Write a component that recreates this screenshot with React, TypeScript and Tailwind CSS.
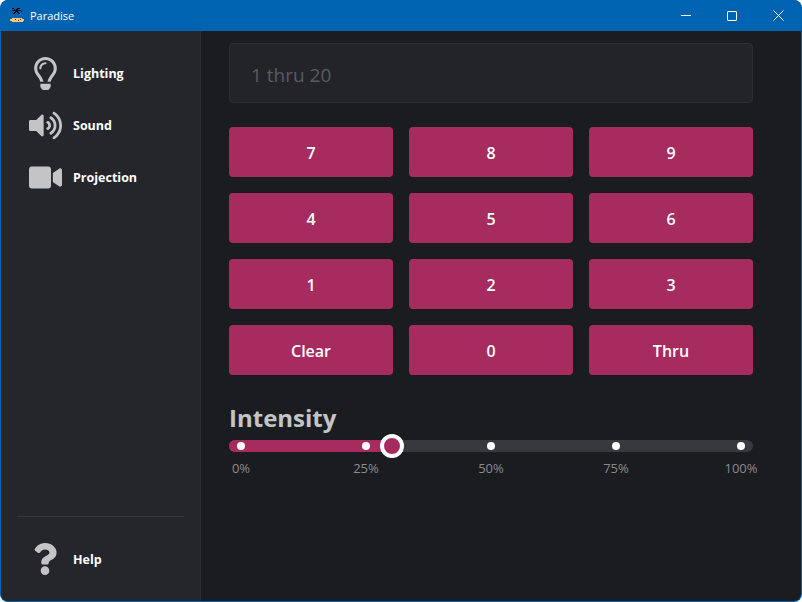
import React from "react";
import { FaRegLightbulb, FaVolumeUp, FaVideo, FaQuestion } from "react-icons/fa";

const keys = ["7", "8", "9", "4", "5", "6", "1", "2", "3", "Clear", "0", "Thru"];
const marks = ["0%", "25%", "50%", "75%", "100%"];

const NavItem = ({ icon, label }: { icon: React.ReactNode; label: string }) => (
  <div className="flex items-center h-[52px] pl-[27px]">
    <div className="w-[34px] h-[34px] flex items-center justify-center text-[#c4c4c6]">{icon}</div>
    <span className="ml-[11px] mt-[2px] text-[12.5px] font-bold text-white">{label}</span>
  </div>
);

// palm tree on a little sand island, drawn on a 16px grid
const Logo = () => (
  <svg width="16" height="16" viewBox="0 0 16 16" shapeRendering="crispEdges">
    <path
      fill="#000"
      d="M3 1h2v1h1v1h1V2h1V1h3v1H9v1h3v1h1v1h-1V4H9v1h1v1h1v1H9V6H8V5H7v1H6v1H4V6h1V5h1V4H3V3h2V2H3z"
    />
    <path fill="#f9c870" d="M3 11h10v1h2v2h-1v1H3v-1H1v-2h2z" />
    <path fill="#4a3410" d="M6 12h1v1H6zM9 13h1v1H9zM11 12h1v1h-1z" />
  </svg>
);

export default function App() {
  return (
    <div
      className="w-[802px] h-[602px] flex flex-col overflow-hidden rounded-lg bg-[#0063b1] border-x border-b border-[#0063b1]"
      style={{ fontFamily: '"Open Sans", "Noto Sans", sans-serif' }}
    >
      {/* Title bar */}
      <div className="h-[31px] shrink-0 flex items-center bg-[#0063b1] text-white">
        <div className="ml-[8px] mb-px">
          <Logo />
        </div>
        <span className="ml-[5px] mt-px text-[11px]">Paradise</span>
        <div className="ml-auto flex items-center">
          <div className="w-[46px] h-[31px] flex items-center justify-center">
            <div className="w-[10px] h-px bg-white" />
          </div>
          <div className="w-[46px] h-[31px] flex items-center justify-center">
            <div className="w-[10px] h-[10px] border border-white rounded-[1px]" />
          </div>
          <div className="w-[46px] h-[31px] flex items-center justify-center">
            <svg width="11" height="11" viewBox="0 0 11 11" stroke="#fff" strokeWidth="1">
              <path d="M0.5 0.5l10 10M10.5 0.5l-10 10" />
            </svg>
          </div>
        </div>
      </div>

      <div className="flex-1 flex min-h-0 bg-[#1b1c20] rounded-b-md overflow-hidden">
        {/* Sidebar */}
        <aside className="w-[199px] shrink-0 bg-[#25262b] border-r border-[#2d2e33] flex flex-col box-content">
          <nav className="pt-4">
            <NavItem icon={<FaRegLightbulb size={33} />} label="Lighting" />
            <NavItem icon={<FaVolumeUp size={33} />} label="Sound" />
            <NavItem icon={<FaVideo size={33} />} label="Projection" />
          </nav>
          <div className="mt-auto mx-4 border-t border-[#36373c]" />
          <div className="pt-4 pb-[16px]">
            <NavItem icon={<FaQuestion size={32} />} label="Help" />
          </div>
        </aside>

        {/* Main */}
        <main className="flex-1 pl-7 pr-12 pt-3">
          <div className="h-[60px] rounded bg-[#232428] border border-[#2d2e33] flex items-center pl-[21px] pt-1 text-[19px] text-[#5a5b5f]">
            1 thru 20
          </div>

          <div className="mt-6 grid grid-cols-3 gap-4">
            {keys.map((k) => (
              <button
                key={k}
                className="h-[50px] pt-px rounded bg-[#a62b5e] text-white text-base font-semibold flex items-center justify-center"
              >
                {k}
              </button>
            ))}
          </div>

          <h2 className="mt-[25px] h-[36px] text-2xl font-bold leading-[36px] text-[#c4c4c6]">Intensity</h2>

          <div className="relative h-3 rounded-full bg-[#38393e] mt-1">
            <div className="h-3 w-[163px] rounded-l-full bg-[#a62b5e]" />
            <div className="absolute inset-0 flex justify-between items-center px-2">
              {marks.map((m) => (
                <div key={m} className="w-2 h-2 rounded-full bg-white" />
              ))}
            </div>
            <div className="absolute left-[151px] top-[-6px] w-6 h-6 rounded-full bg-[#a62b5e] border-4 border-white" />
          </div>
          <div className="mt-[7px] flex justify-between px-3 text-[13px] text-[#8a8b90]">
            {marks.map((m) => (
              <div key={m} className="w-0 flex justify-center">
                <span>{m}</span>
              </div>
            ))}
          </div>
        </main>
      </div>
    </div>
  );
}
